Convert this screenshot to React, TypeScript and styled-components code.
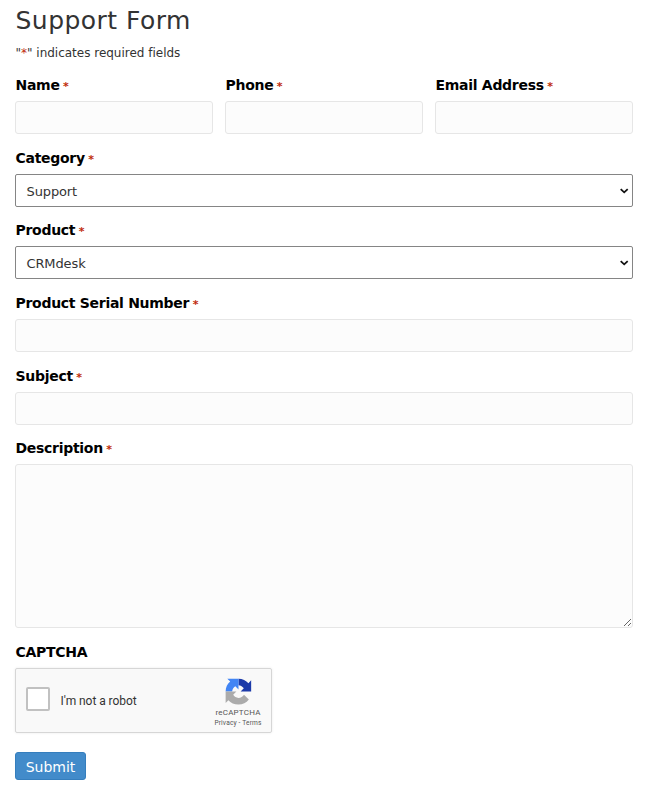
import React from "react";
import styled, { createGlobalStyle } from "styled-components";

const Global = createGlobalStyle`
  * { box-sizing: border-box; }
  body {
    margin: 0;
    background: #fff;
    color: #333;
    font-family: Verdana, "DejaVu Sans", sans-serif;
  }
`;

const Form = styled.form`
  display: flex;
  flex-direction: column;
  width: 650px;
  height: 787px;
  padding: 4px 17px 0 15px;
`;

const Title = styled.h1`
  margin: 0;
  height: 35px;
  padding-left: 0.5px;
  font-size: 25px;
  line-height: 33px;
  font-weight: 400;
  letter-spacing: 0.46px;
`;

const Hint = styled.p`
  margin: 0;
  height: 37px;
  padding-left: 0.5px;
  font-size: 12px;
  line-height: 28px;
  letter-spacing: -0.01px;
`;

const Columns = styled.div`
  display: grid;
  grid-template-columns: repeat(3, 198px);
  gap: 12px;
`;

const Field = styled.div<{ $gap?: number }>`
  display: flex;
  flex-direction: column;
  margin-bottom: ${(p) => p.$gap ?? 15}px;
`;

const Label = styled.label`
  height: 25px;
  padding-left: 0.5px;
  font-size: 14px;
  line-height: 18px;
  font-weight: 700;
  letter-spacing: -0.29px;
  color: #000;
  white-space: nowrap;
`;

const Required = styled.span`
  color: #c02b0a;
  font-size: 11px;
  font-weight: 700;
  letter-spacing: 0;
  margin-left: 3.5px;
`;

const Star = styled.span`
  color: #c02b0a;
`;

const Input = styled.input`
  width: 100%;
  height: 33px;
  border: 1px solid #e6e6e6;
  border-radius: 3px;
  background: #fcfcfc;
  padding: 0 11px;
  font: inherit;
  font-size: 13px;
`;

const TextArea = styled.textarea`
  display: block;
  width: 100%;
  height: 164px;
  border: 1px solid #e6e6e6;
  border-radius: 3px;
  background: #fcfcfc;
  padding: 8px 11px;
  resize: vertical;
`;

const SelectBox = styled.button`
  display: flex;
  align-items: center;
  justify-content: space-between;
  width: 100%;
  height: 33px;
  border: 1px solid #858585;
  border-radius: 2px;
  background: #fff;
  padding: 1px 3px 0 10.5px;
  font: inherit;
  font-size: 13px;
  letter-spacing: -0.12px;
  color: #333;
`;

const Captcha = styled.div`
  display: flex;
  align-items: center;
  width: 257px;
  height: 65px;
  border: 1px solid #d6d6d6;
  border-radius: 2px;
  background: #f9f9f9;
  box-shadow: 0 0 3px rgba(0, 0, 0, 0.08);
  padding-left: 10px;
  font-family: Roboto, sans-serif;
`;

const CheckBox = styled.span`
  width: 24px;
  height: 24px;
  border: 2px solid #c1c1c1;
  border-radius: 2px;
  background: #fff;
  margin-top: -3px;
`;

const RobotText = styled.span`
  flex: 1;
  margin-left: 10.5px;
  font-size: 12px;
  letter-spacing: -0.05px;
  color: #333;
`;

const Brand = styled.div`
  display: flex;
  flex-direction: column;
  align-items: center;
  align-self: stretch;
  width: 66px;
  padding-top: 9px;
  color: #555;
`;

const BrandName = styled.span`
  margin-top: 2px;
  font-size: 8px;
  line-height: 11px;
  letter-spacing: 0.22px;
`;

const Legal = styled.span`
  font-size: 6.6px;
  line-height: 10px;
  letter-spacing: 0.16px;
  white-space: nowrap;
`;

const Submit = styled.button`
  align-self: flex-start;
  width: 71px;
  height: 28px;
  border: 1px solid #357ebd;
  border-radius: 3px;
  background: #428bca;
  color: #fff;
  padding: 1px 0 0;
  font: inherit;
  font-size: 14px;
  line-height: 26px;
`;

const Chevron = () => (
  <svg width="10" height="8" viewBox="0 0 10 8" fill="none">
    <path d="M1.7 2.2 5.2 5.4 8.7 2.2" stroke="#111" strokeWidth="1.8" />
  </svg>
);

const Logo = () => (
  <svg width="27" height="27" viewBox="0 0 64 64">
    <path fill="#1c3aa9" d="M62 32V5.5l-6.5 6.8C50 5.5 41.5 1.5 32 1.5V17c5.4.2 10 3.2 12.6 7.4L37 32h25Z" />
    <path fill="#4285f4" d="M32 1.5H5.5l6.8 6.5C5.500 13.500 1.500 22 1.500 32H17c.2-5.400 3.200-10 7.400-12.600L32 27V1.500Z" />
    <path fill="#ababab" d="M1.500 32v27l6.500-6.500C13.500 59 22 63 32 63c10 0 18.500-4.500 24.500-12L45 39.500c-2.700 4.500-7.500 7.800-13 7.800-5.400-.2-10-3.200-12.600-7.400L27 32H1.500Z" />
  </svg>
);

const FieldLabel = ({ text }: { text: string }) => (
  <Label>
    {text}
    <Required>*</Required>
  </Label>
);

const TextField = ({ label, gap }: { label: string; gap?: number }) => (
  <Field $gap={gap}>
    <FieldLabel text={label} />
    <Input aria-label={label} />
  </Field>
);

const SelectField = ({ label, value, gap = 14 }: { label: string; value: string; gap?: number }) => (
  <Field $gap={gap}>
    <FieldLabel text={label} />
    <SelectBox type="button">
      {value}
      <Chevron />
    </SelectBox>
  </Field>
);

export default function App() {
  return (
    <>
      <Global />
      <Form onSubmit={(e) => e.preventDefault()}>
        <Title>Support Form</Title>
        <Hint>
          "<Star>*</Star>" indicates required fields
        </Hint>
        <Columns>
          <TextField label="Name" />
          <TextField label="Phone" />
          <TextField label="Email Address" />
        </Columns>
        <SelectField label="Category" value="Support" />
        <SelectField label="Product" value="CRMdesk" gap={15} />
        <TextField label="Product Serial Number" />
        <TextField label="Subject" gap={14} />
        <Field>
          <FieldLabel text="Description" />
          <TextArea aria-label="Description" />
        </Field>
        <Field $gap={19}>
          <Label>CAPTCHA</Label>
          <Captcha>
            <CheckBox />
            <RobotText>I'm not a robot</RobotText>
            <Brand>
              <Logo />
              <BrandName>reCAPTCHA</BrandName>
              <Legal>Privacy - Terms</Legal>
            </Brand>
          </Captcha>
        </Field>
        <Submit type="submit">Submit</Submit>
      </Form>
    </>
  );
}
